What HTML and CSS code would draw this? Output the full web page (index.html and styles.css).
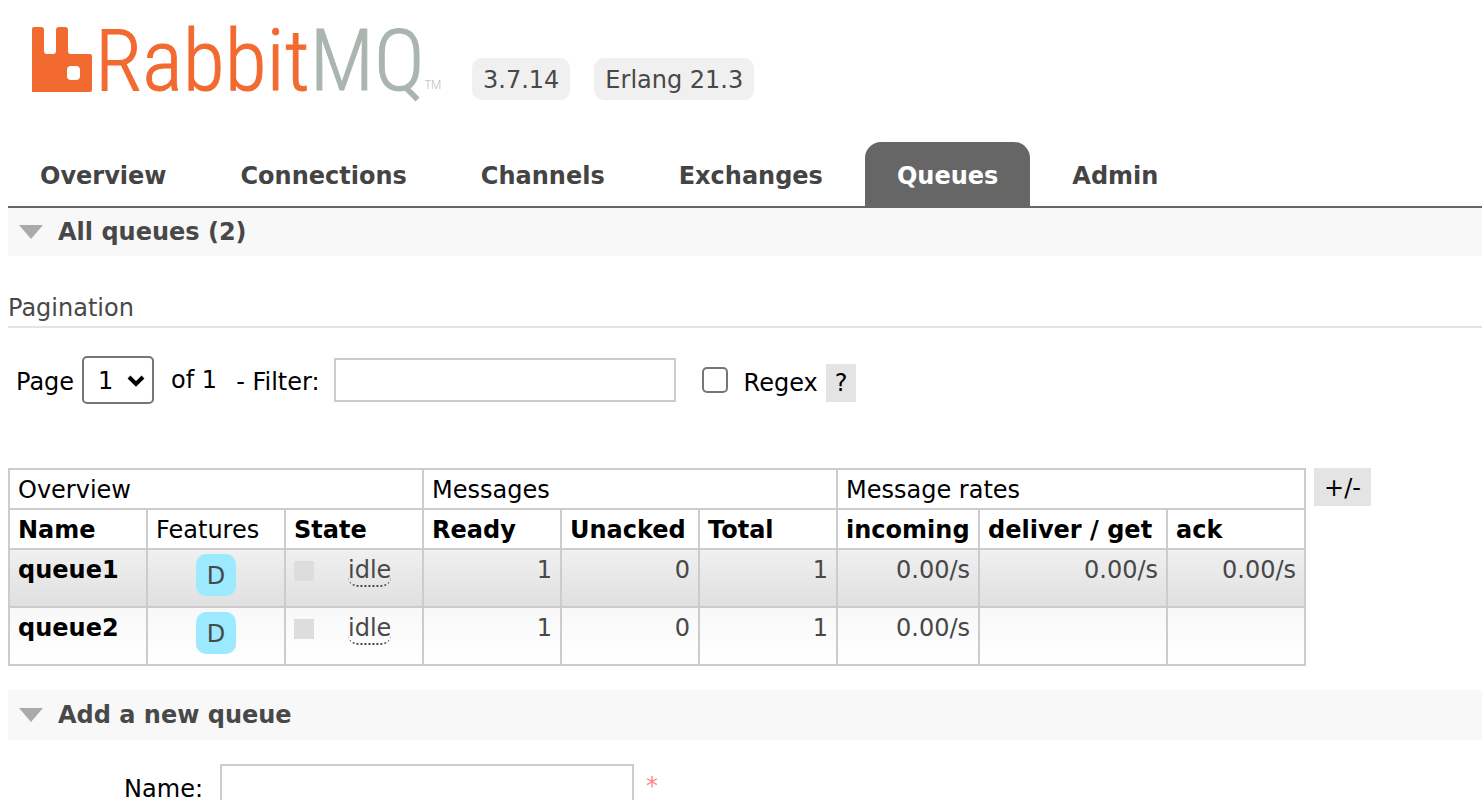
FILE: index.html
```html
<!DOCTYPE html>
<html lang="en">
<head>
<meta charset="utf-8">
<title>RabbitMQ Management</title>
<link rel="stylesheet" href="styles.css">
</head>
<body>
<header class="header">
  <a class="logo" href="#">
    <svg class="logo-mark" viewBox="0 0 60 66" aria-hidden="true">
      <path fill="#f26a30" fill-rule="evenodd" d="M0 3Q0 1 2 1H9Q12 1 12 4V25Q12 28 15 28H21Q24 28 24 25V4Q24 1 27 1H33Q36 1 36 4V25Q36 28 39 28H58Q60 28 60 30V64Q60 66 58 66H0ZM39 40Q35 40 35 44V50Q35 54 39 54H44Q48 54 48 50V44Q48 40 44 40Z"/>
    </svg>
    <span class="logo-text">Rabbit<span class="logo-mq">MQ</span></span>
    <span class="logo-tm">TM</span>
  </a>
  <ul class="versions">
    <li class="version">3.7.14</li>
    <li class="version">Erlang 21.3</li>
  </ul>
</header>

<nav class="tabs">
  <a class="tab" href="#">Overview</a>
  <a class="tab" href="#">Connections</a>
  <a class="tab" href="#">Channels</a>
  <a class="tab" href="#">Exchanges</a>
  <a class="tab selected" href="#">Queues</a>
  <a class="tab" href="#">Admin</a>
</nav>

<main class="main">
  <section>
    <h2 class="section-title">
      <svg class="arrow" viewBox="0 0 24 14" aria-hidden="true"><path d="M0 0H24L12 14Z"/></svg>
      All queues (2)
    </h2>
    <h3 class="subtitle">Pagination</h3>
    <form class="pagination">
      <label class="page-label" for="page">Page</label>
      <span class="select-wrap">
        <select id="page" class="page-select"><option>1</option></select>
        <svg class="chevron" viewBox="0 0 18 12" aria-hidden="true"><path d="M2 2L9 9L16 2"/></svg>
      </span>
      <span class="page-count">of 1</span>
      <label class="filter-label" for="filter">- Filter:</label>
      <input id="filter" class="text-input filter-input" type="text">
      <input id="regex" class="checkbox" type="checkbox">
      <span class="regex">
        <label for="regex">Regex</label>
        <button class="help" type="button">?</button>
      </span>
    </form>

    <div class="table-row">
      <table class="queues">
        <colgroup>
          <col class="c-std" span="6">
          <col class="c-in">
          <col class="c-get">
          <col class="c-std">
        </colgroup>
        <thead>
          <tr><th class="plain" colspan="3">Overview</th><th class="plain" colspan="3">Messages</th><th class="plain" colspan="3">Message rates</th></tr>
          <tr><th>Name</th><th class="plain">Features</th><th>State</th><th>Ready</th><th>Unacked</th><th>Total</th><th>incoming</th><th>deliver / get</th><th>ack</th></tr>
        </thead>
        <tbody>
          <tr class="alt">
            <td><a class="queue-link" href="#">queue1</a></td>
            <td class="center"><span class="feature">D</span></td>
            <td><div class="state"><span class="swatch"></span><abbr class="status">idle</abbr></div></td>
            <td class="num">1</td><td class="num">0</td><td class="num">1</td>
            <td class="num">0.00/s</td><td class="num">0.00/s</td><td class="num">0.00/s</td>
          </tr>
          <tr>
            <td><a class="queue-link" href="#">queue2</a></td>
            <td class="center"><span class="feature">D</span></td>
            <td><div class="state"><span class="swatch"></span><abbr class="status">idle</abbr></div></td>
            <td class="num">1</td><td class="num">0</td><td class="num">1</td>
            <td class="num">0.00/s</td><td></td><td></td>
          </tr>
        </tbody>
      </table>
      <button class="help columns-toggle" type="button">+/-</button>
    </div>
  </section>

  <section>
    <h2 class="section-title tall">
      <svg class="arrow" viewBox="0 0 24 14" aria-hidden="true"><path d="M0 0H24L12 14Z"/></svg>
      Add a new queue
    </h2>
    <form class="add-form">
      <label class="name-label" for="name">Name:</label>
      <input id="name" class="text-input name-input" type="text">
      <span class="required">*</span>
    </form>
  </section>
</main>
</body>
</html>
```

FILE: styles.css
```css
* {
  box-sizing: border-box;
}

body {
  margin: 0 0 0 8px;
  background: #fff;
  color: #000;
  font: 24px/30px Verdana, "DejaVu Sans", sans-serif;
}

input,
select,
button {
  margin: 0;
  color: #000;
  font: inherit;
}

a {
  color: inherit;
  text-decoration: none;
}

.header {
  display: flex;
  height: 142px;
  padding-left: 24px;
}

.logo {
  display: flex;
  width: 416px;
  padding-top: 26px;
  color: #f26a30;
}

.logo-mark {
  flex: none;
  width: 60px;
  height: 66px;
}

.logo-text {
  margin-left: 3px;
  font: 300 86px/70px "Roboto Condensed", Roboto, sans-serif;
  -webkit-text-stroke: 1px;
}

.logo-mq,
.logo-tm {
  color: #a9b5ae;
}

.logo-tm {
  margin: 51px 0 0;
  font: 300 12px/16px "Open Sans", sans-serif;
}

.versions {
  display: flex;
  gap: 24px;
  margin: 58px 0 0 24px;
  padding: 0;
  list-style: none;
}

.version {
  height: 42px;
  padding: 0 11px;
  border-radius: 10px;
  background: #f0f0f0;
  color: #484848;
  line-height: 44px;
}

.tabs {
  display: flex;
  gap: 10px;
  border-bottom: 2px solid #666;
}

.tab {
  height: 64px;
  padding: 0 32px;
  border-radius: 16px 16px 0 0;
  color: #444;
  font-weight: bold;
  line-height: 68px;
}

.tab.selected {
  background: #666;
  color: #fff;
}

.section-title {
  display: flex;
  align-items: center;
  gap: 15px;
  height: 48px;
  margin: 0;
  padding: 0 11px;
  background: #f8f8f8;
  color: #484848;
  font-size: 24px;
}

.section-title.tall {
  height: 50px;
  margin-top: 24px;
}

.arrow {
  width: 24px;
  height: 14px;
  fill: #aaa;
}

.subtitle {
  margin: 37px 0 0;
  padding-bottom: 3px;
  border-bottom: 2px solid #e4e4e4;
  color: #484848;
  font-size: 24px;
  font-weight: normal;
}

.pagination {
  display: flex;
  align-items: center;
  margin-top: 28px;
  padding-left: 8px;
}

.page-label,
.filter-label {
  padding-top: 3px;
}

.select-wrap {
  position: relative;
  margin: 0 17px 0 8px;
}

.page-select {
  display: block;
  width: 72px;
  height: 48px;
  padding: 2px 14px 0;
  border: 2px solid #767676;
  border-radius: 5px;
  background: #fff;
  appearance: none;
}

.chevron {
  position: absolute;
  top: 19px;
  right: 9px;
  width: 18px;
  height: 12px;
  fill: none;
  stroke: #000;
  stroke-width: 4px;
  pointer-events: none;
}

.filter-label {
  margin-left: 19px;
}

.text-input {
  height: 44px;
  padding: 4px;
  border: 2px solid #ccc;
  background: #fff;
}

.filter-input {
  width: 342px;
  margin-left: 14px;
}

.checkbox {
  width: 26px;
  height: 26px;
  margin: 0 16px 0 26px;
  border: 2px solid #767676;
  border-radius: 5px;
  background: #fff;
  appearance: none;
}

.checkbox:checked {
  background: #767676;
}

.regex {
  display: flex;
  align-items: center;
  gap: 8px;
  padding-top: 6px;
}

.help {
  height: 38px;
  padding: 0 9px;
  border: 0;
  background: #e4e4e4;
}

.columns-toggle {
  padding: 2px 10px 0;
}

.table-row {
  display: flex;
  align-items: flex-start;
  gap: 8px;
  margin-top: 64px;
}

.queues {
  border-collapse: collapse;
  table-layout: fixed;
  width: 1298px;
}

.c-std {
  width: 138px;
}

.c-in {
  width: 142px;
}

.c-get {
  width: 188px;
}

.queues th,
.queues td {
  padding: 5px 8px 3px;
  border: 2px solid #ccc;
  text-align: left;
  vertical-align: top;
  white-space: nowrap;
}

.queues th {
  height: 40px;
}

.queues td {
  height: 58px;
  background: linear-gradient(#f8f8f8, #fff);
  color: #484848;
}

.queues .alt td {
  background: linear-gradient(#f0f0f0, #e0e0e0);
}

.queues .plain {
  font-weight: normal;
}

.queues .num {
  text-align: right;
}

.queues .center {
  padding-top: 4px;
  text-align: center;
}

.queue-link {
  color: #000;
  font-weight: bold;
}

.feature {
  display: inline-block;
  height: 42px;
  padding: 0 11px;
  border-radius: 10px;
  background: #9beaff;
  line-height: 44px;
}

.state {
  display: flex;
  align-items: center;
  gap: 34px;
}

.swatch {
  width: 20px;
  height: 20px;
  background: #ddd;
}

.status {
  border-bottom: 2px dotted #484848;
  border-radius: 10px;
  line-height: 30px;
  text-decoration: none;
}

.add-form {
  display: flex;
  align-items: center;
  margin-top: 24px;
}

.name-label {
  width: 195px;
  padding-top: 6px;
  text-align: right;
}

.name-input {
  width: 414px;
  margin-left: 17px;
}

.required {
  margin-left: 12px;
  color: #f88;
}
```
